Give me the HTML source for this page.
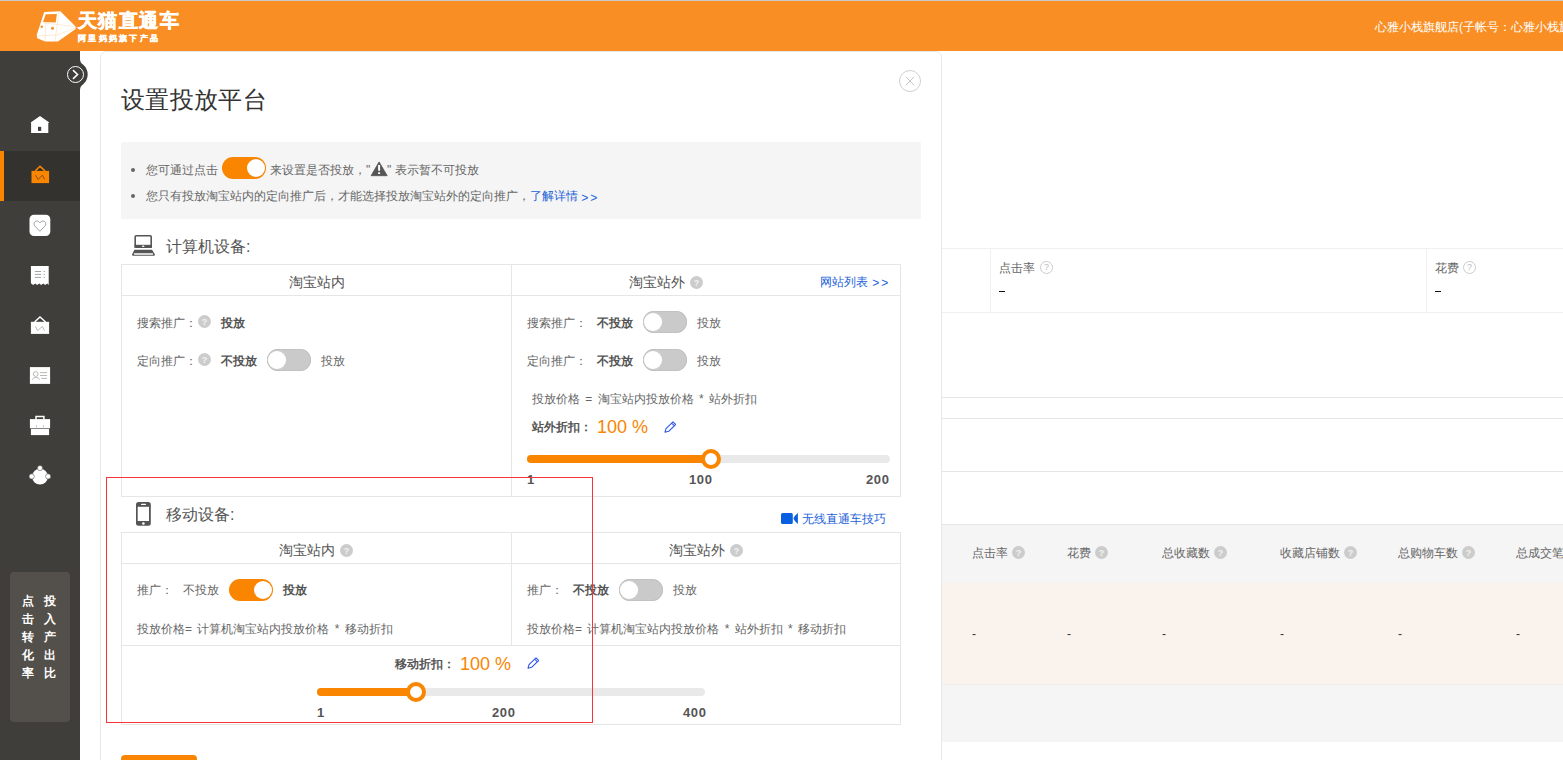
<!DOCTYPE html>
<html><head><meta charset="utf-8">
<style>
*{box-sizing:border-box;margin:0;padding:0}
html,body{width:1563px;height:760px;overflow:hidden;background:#fff;font-family:"Liberation Sans",sans-serif;font-size:12px;color:#666}
.a{position:absolute;white-space:nowrap}
.t{position:absolute;white-space:nowrap;line-height:16px;font-size:12px}
.q{position:absolute;width:13px;height:13px;border-radius:50%;background:#ccc;color:#f2f2f2;font-size:9px;line-height:14px;text-align:center;font-weight:bold}
.qo{position:absolute;width:13px;height:13px;border-radius:50%;border:1px solid #ccc;color:#bbb;font-size:9px;line-height:11px;text-align:center}
.tg{position:absolute;width:44px;height:22px;border-radius:11px;background:#cacaca;box-shadow:inset 0 0 0 0.8px #c0c0c0}
.tg:after{content:"";position:absolute;left:1px;top:2px;width:18px;height:18px;border-radius:50%;background:#fff;box-shadow:0 0 0 0.6px #d0d0d0}
.tg.on{background:#f98500;box-shadow:none}
.tg.on:after{left:25px;box-shadow:none}
.b{font-weight:bold;color:#555}
.or{color:#f98500}
.lk{color:#2262d8}
.hl{position:absolute;height:1px;background:#e6e6e6}
.vl{position:absolute;width:1px;background:#e6e6e6}
.trk{position:absolute;height:8px;border-radius:4px;background:#e9e9e9}
.fil{position:absolute;height:8px;border-radius:4px;background:#f98500}
.hd{position:absolute;width:20px;height:20px;border-radius:50%;border:4px solid #f98500;background:#fff}
.num{position:absolute;white-space:nowrap;font-weight:bold;font-size:13px;line-height:14px;color:#555;letter-spacing:0.6px}
</style></head><body>
<div class="a" style="left:0;top:0;width:1563px;height:1px;background:#c9c9c9"></div>
<div class="a" style="left:0;top:1px;width:1563px;height:50px;background:#f98f24"></div>
<svg class="a" style="left:34px;top:8px" width="46" height="37" viewBox="0 0 46 37">
 <path d="M10.2 4.1 L26.3 3.2 L41.6 18.5 L41.6 20.9 L23.9 33.6 L11.2 33.6 L3.2 30.2 L2.7 27 Z" fill="#fff"/>
 <path d="M11.7 6.3 L22.9 6.1 L21.7 14.6 L9 13.9 Z" fill="#f98f24"/>
 <circle cx="7.8" cy="18.7" r="1.2" fill="#f98f24"/>
 <circle cx="18.5" cy="20.2" r="1.5" fill="#f98f24"/>
 <path d="M3 28 L23 27 L41.6 20 M25 4 L21 33 M10 15 L41 18.5 M12 14 L11 33" stroke="#fcc98f" stroke-width="0.4" fill="none"/>
</svg>
<div class="a" style="left:78px;top:8px;font-size:19px;line-height:26px;font-weight:bold;color:#fff;letter-spacing:1.4px;-webkit-text-stroke:0.6px #fff">天猫直通车</div>
<div class="a" style="left:78px;top:34px;font-size:8px;line-height:10px;font-weight:bold;color:#fff;letter-spacing:2.3px;-webkit-text-stroke:0.3px #fff">阿里妈妈旗下产品</div>
<div class="a" style="left:1375px;top:18.5px;font-size:12px;line-height:16px;color:#fff">心雅小栈旗舰店(子帐号：心雅小栈旗舰店</div>

<div class="a" style="left:0;top:51px;width:80px;height:709px;background:#403e3a"></div>
<svg class="a" style="left:0;top:0" width="100" height="100" viewBox="0 0 100 100"><path d="M79 58 L80 58 C80 62 81 63 83 64.5 A13 13 0 0 1 83 84.5 C81 86 80 87 80 91 L79 91 Z" fill="#403e3a"/></svg>
<div class="a" style="left:66.5px;top:65.8px;width:17px;height:17px;border:1.5px solid #fff;border-radius:50%"></div>
<svg class="a" style="left:70px;top:69px" width="10" height="11" viewBox="0 0 10 11"><path d="M3 1.2 L7.5 5.5 L3 9.8" stroke="#fff" stroke-width="1.6" fill="none"/></svg>
<div class="a" style="left:0;top:151px;width:80px;height:50px;background:#34322e"></div>
<div class="a" style="left:0;top:151px;width:4px;height:50px;background:#f98500"></div>
<svg class="a" style="left:25px;top:110px" width="30" height="30" viewBox="0 0 30 30"><path d="M15 5.9 L24.3 12.4 L23.3 12.9 L23.3 22.9 L6.1 22.9 L6.1 12.9 L5.7 12.4 Z" fill="#fff"/><rect x="13" y="16.8" width="3.2" height="4.1" fill="#403e3a"/></svg>
<svg class="a" style="left:25px;top:160px" width="30" height="30" viewBox="0 0 30 30"><path d="M10.2 11 L15 6.3 L20.2 11" fill="none" stroke="#f98500" stroke-width="1.6"/><rect x="6.5" y="10.9" width="17.6" height="12.2" fill="#f98500"/><path d="M10.5 15.2 L13.2 19.5 L17.4 15.2 L19.7 19.5" stroke="#7a4a1a" stroke-width="0.9" fill="none"/></svg>
<svg class="a" style="left:25px;top:210px" width="30" height="30" viewBox="0 0 30 30"><rect x="4.5" y="4.7" width="20.8" height="21.3" rx="4.5" fill="#fff"/><path d="M14.9 21.3 L10 16.2 C8.3 14.4 9 11.2 11.6 11.1 C13.1 11 14.3 12 14.9 12.9 C15.5 12 16.7 11 18.2 11.1 C20.8 11.2 21.5 14.4 19.8 16.2 Z" fill="none" stroke="#8c8a86" stroke-width="0.8"/></svg>
<svg class="a" style="left:25px;top:260px" width="30" height="30" viewBox="0 0 30 30"><path d="M5.9 5.9 H23.7 V24.9 L22.3 23.4 L20.1 24.9 L18.4 23.4 L16.1 24.9 L14.3 23.4 L12.1 24.9 L10.3 23.4 L8.1 24.9 L5.9 23.2 Z" fill="#fff"/><path d="M9.9 11.5 H16.2 M9.9 14.4 H16.2 M9.9 17.4 H16.2 M18.6 11.5 H19.9 M18.6 14.4 H19.9 M18.6 17.4 H19.9" stroke="#9a9894" stroke-width="0.9"/></svg>
<svg class="a" style="left:25px;top:310px" width="30" height="30" viewBox="0 0 30 30"><path d="M9.6 12 L15 6.9 L20.6 12" fill="none" stroke="#fff" stroke-width="1.5"/><rect x="5.9" y="11.8" width="18.2" height="12.1" fill="#fff"/><path d="M10.5 16.4 L12.6 20.5 L17.4 16.4 L19.5 20.5" stroke="#a9a7a3" stroke-width="0.8" fill="none"/></svg>
<svg class="a" style="left:25px;top:360px" width="30" height="30" viewBox="0 0 30 30"><rect x="4.9" y="7.1" width="20.2" height="16.8" fill="#fff"/><circle cx="10.7" cy="14" r="2.4" fill="none" stroke="#a9a7a3" stroke-width="0.8"/><path d="M7.3 19.7 C7.6 16.8 13.9 16.8 14.4 19.7" fill="none" stroke="#a9a7a3" stroke-width="0.8"/><path d="M15 12.6 H22.1 M15 15.5 H22.1 M16.2 18.4 H22.1" stroke="#a9a7a3" stroke-width="0.8"/></svg>
<svg class="a" style="left:25px;top:410px" width="30" height="30" viewBox="0 0 30 30"><path d="M11 9.5 V6.6 H18.9 V9.5" fill="none" stroke="#fff" stroke-width="1.5"/><rect x="4.9" y="9.1" width="20.2" height="9.1" fill="#fff"/><rect x="5.9" y="18.8" width="18.2" height="6.3" fill="#fff"/><path d="M11.4 15 V19 M18.4 15 V19" stroke="#b9b7b3" stroke-width="0.7"/></svg>
<svg class="a" style="left:25px;top:460px" width="30" height="30" viewBox="0 0 30 30"><circle cx="15" cy="16.6" r="7.9" fill="#fff"/><circle cx="15" cy="8.1" r="2.6" fill="#fff" stroke="#403e3a" stroke-width="0.5"/><circle cx="6.7" cy="16.4" r="2.6" fill="#fff" stroke="#403e3a" stroke-width="0.5"/><circle cx="23.1" cy="16.4" r="2.6" fill="#fff" stroke="#403e3a" stroke-width="0.5"/></svg>
<div class="a" style="left:10px;top:572px;width:60px;height:150px;border-radius:4px;background:#534f4a"></div>
<div class="a" style="left:20px;top:592px;width:16px;font-size:12px;line-height:18px;color:#fff;font-weight:bold;white-space:normal;text-align:center">点击转化率</div>
<div class="a" style="left:42px;top:592px;width:16px;font-size:12px;line-height:18px;color:#fff;font-weight:bold;white-space:normal;text-align:center">投入产出比</div>

<div class="hl" style="left:941px;top:248px;width:622px;background:#f0f0f0"></div>
<div class="hl" style="left:941px;top:312px;width:622px;background:#f0f0f0"></div>
<div class="vl" style="left:990px;top:248px;height:64px;background:#f0f0f0"></div>
<div class="vl" style="left:1426px;top:248px;height:64px;background:#f0f0f0"></div>

<div class="t " style="left:999px;top:259.7px;">点击率</div>

<div class="qo" style="left:1040px;top:261px">?</div>
<div class="a" style="left:999px;top:290.6px;width:5.5px;height:1.6px;background:#111"></div>
<div class="t " style="left:1435px;top:259.7px;">花费</div>

<div class="qo" style="left:1463px;top:261px">?</div>
<div class="a" style="left:1435px;top:290.6px;width:5.5px;height:1.6px;background:#111"></div>
<div class="hl" style="left:941px;top:397px;width:622px"></div>
<div class="hl" style="left:941px;top:418px;width:622px"></div>
<div class="hl" style="left:941px;top:471px;width:622px"></div>
<div class="hl" style="left:941px;top:524px;width:622px"></div>
<div class="a" style="left:941px;top:525px;width:622px;height:57px;background:#f5f5f5"></div>
<div class="a" style="left:941px;top:582px;width:622px;height:102px;background:#faf2ec"></div>
<div class="hl" style="left:941px;top:684px;width:622px;background:#eee"></div>
<div class="a" style="left:941px;top:685px;width:622px;height:57px;background:#f5f5f5"></div>

<div class="t " style="left:972px;top:545px;">点击率</div>

<div class="q" style="left:1012px;top:546px">?</div>
<div class="t " style="left:972px;top:626px;color:#333">-</div>

<div class="t " style="left:1067px;top:545px;">花费</div>

<div class="q" style="left:1095px;top:546px">?</div>
<div class="t " style="left:1067px;top:626px;color:#333">-</div>

<div class="t " style="left:1162px;top:545px;">总收藏数</div>

<div class="q" style="left:1214px;top:546px">?</div>
<div class="t " style="left:1162px;top:626px;color:#333">-</div>

<div class="t " style="left:1280px;top:545px;">收藏店铺数</div>

<div class="q" style="left:1344px;top:546px">?</div>
<div class="t " style="left:1280px;top:626px;color:#333">-</div>

<div class="t " style="left:1398px;top:545px;">总购物车数</div>

<div class="q" style="left:1462px;top:546px">?</div>
<div class="t " style="left:1398px;top:626px;color:#333">-</div>

<div class="t " style="left:1516px;top:545px;">总成交笔数</div>

<div class="q" style="left:1580px;top:546px">?</div>
<div class="t " style="left:1516px;top:626px;color:#333">-</div>

<div class="a" style="left:100px;top:51px;width:842px;height:760px;border:1px solid #e8e8e8;border-radius:6px;background:#fff"></div>
<div class="a" style="left:121px;top:84px;font-size:24px;line-height:32px;color:#333;letter-spacing:0.35px">设置投放平台</div>
<div class="a" style="left:899px;top:70px;width:22px;height:22px;border:1px solid #cfcfcf;border-radius:50%"></div>
<svg class="a" style="left:904px;top:75px" width="12" height="12" viewBox="0 0 12 12"><path d="M1.8 1.8 L10.2 10.2 M10.2 1.8 L1.8 10.2" stroke="#c6c6c6" stroke-width="1"/></svg>
<div class="a" style="left:121px;top:142px;width:800px;height:77px;background:#f5f5f5;border-radius:2px"></div>
<div class="a" style="left:131px;top:168px;width:4px;height:4px;border-radius:50%;background:#666"></div>
<div class="a" style="left:131px;top:194px;width:4px;height:4px;border-radius:50%;background:#666"></div>
<div class="t " style="left:146px;top:161.5px;">您可通过点击</div>

<div class="tg on" style="left:222px;top:157px"></div>
<div class="t " style="left:270px;top:161.5px;">来设置是否投放，"</div>

<svg class="a" style="left:370px;top:161px" width="18" height="16" viewBox="0 0 18 16"><path d="M9.1 0.9 L17.2 14.7 L1.1 14.7 Z" fill="#555" stroke="#555" stroke-width="0.8" stroke-linejoin="round"/><path d="M9.1 3.9 V9.8 M9.1 11.2 V13" stroke="#fff" stroke-width="2"/></svg>
<div class="t " style="left:387px;top:161.5px;">" 表示暂不可投放</div>

<div class="t " style="left:146px;top:188px;">您只有投放淘宝站内的定向推广后，才能选择投放淘宝站外的定向推广，<span class="lk">了解详情 <span style="letter-spacing:2px;position:relative;top:1.5px">&gt;&gt;</span></span></div>

<svg class="a" style="left:132px;top:235px" width="24" height="22" viewBox="0 0 24 22"><rect x="3.2" y="0.8" width="16" height="11.3" rx="1" fill="none" stroke="#555" stroke-width="1.6"/><rect x="2.4" y="9.8" width="17.6" height="3.1" fill="#555"/><ellipse cx="11.2" cy="11.3" rx="1.3" ry="0.7" fill="#fff"/><path d="M2.4 14.8 H20 L23 19.5 Q23 20.8 21.8 20.8 H1.2 Q0 20.8 0 19.5 Z" fill="#555"/><rect x="1.8" y="18.3" width="19.4" height="1.4" rx="0.7" fill="#fff"/></svg>
<div class="a" style="left:166px;top:237px;font-size:16px;line-height:20px;color:#555">计算机设备:</div>
<div class="a" style="left:121px;top:264px;width:780px;height:233px;border:1px solid #e6e6e6"></div>
<div class="hl" style="left:122px;top:295px;width:778px"></div>
<div class="vl" style="left:511px;top:265px;height:231px"></div>
<div class="t " style="left:289px;top:274px;font-size:14px;color:#555">淘宝站内</div>

<div class="t " style="left:629px;top:274px;font-size:14px;color:#555">淘宝站外</div>

<div class="q" style="left:690px;top:276px">?</div>
<div class="t lk" style="left:820px;top:274px;font-size:12px">网站列表 <span style="letter-spacing:2px;margin-left:1px;position:relative;top:1px">&gt;&gt;</span></div>

<div class="t " style="left:137px;top:314.7px;">搜索推广：</div>

<div class="q" style="left:198px;top:315px">?</div>
<div class="t b" style="left:221px;top:314.7px;">投放</div>

<div class="t " style="left:137px;top:352.7px;">定向推广：</div>

<div class="q" style="left:198px;top:353px">?</div>
<div class="t b" style="left:221px;top:352.7px;">不投放</div>

<div class="tg" style="left:267px;top:349px"></div>
<div class="t " style="left:321px;top:352.7px;">投放</div>

<div class="t " style="left:527px;top:314.7px;">搜索推广：</div>

<div class="t b" style="left:597px;top:314.7px;">不投放</div>

<div class="tg" style="left:643px;top:311px"></div>
<div class="t " style="left:697px;top:314.7px;">投放</div>

<div class="t " style="left:527px;top:352.7px;">定向推广：</div>

<div class="t b" style="left:597px;top:352.7px;">不投放</div>

<div class="tg" style="left:643px;top:349px"></div>
<div class="t " style="left:697px;top:352.7px;">投放</div>

<div class="t " style="left:532px;top:391px;word-spacing:2px">投放价格 = 淘宝站内投放价格 * 站外折扣</div>

<div class="t b" style="left:532px;top:418.7px;">站外折扣：</div>

<div class="a or" style="left:597px;top:416px;font-size:18px;line-height:22px">100 %</div>
<svg class="a" style="left:664px;top:421px" width="12" height="12" viewBox="0 0 12 12"><path d="M1 11.2 L2 7.7 L9 0.8 L11.7 3.5 L4.6 10.3 Z M7.7 2.1 L10.4 4.8" fill="none" stroke="#2f55e6" stroke-width="1.1" stroke-linejoin="round"/></svg>
<div class="trk" style="left:527px;top:455px;width:363px"></div>
<div class="fil" style="left:527px;top:455px;width:184px"></div>
<div class="hd" style="left:701px;top:449px"></div>
<div class="num" style="left:527px;top:473px">1</div>
<div class="num" style="left:689px;top:473px">100</div>
<div class="num" style="left:866px;top:473px">200</div>
<svg class="a" style="left:136px;top:502px" width="15" height="24" viewBox="0 0 15 24"><path d="M2.5 0 H12.3 Q14.8 0 14.8 2.5 V21.3 Q14.8 23.8 12.3 23.8 H2.5 Q0 23.8 0 21.3 V2.5 Q0 0 2.5 0 Z" fill="#555"/><rect x="1.7" y="4.8" width="11.3" height="14.2" fill="#fff"/><rect x="5" y="1.8" width="5" height="1.2" rx="0.6" fill="#fff"/><circle cx="7.4" cy="21.5" r="1.3" fill="#fff"/></svg>
<div class="a" style="left:166px;top:505px;font-size:16px;line-height:20px;color:#555">移动设备:</div>
<svg class="a" style="left:781px;top:513px" width="18" height="11" viewBox="0 0 18 11"><rect x="0" y="0" width="11.8" height="11" rx="1.6" fill="#0a5fe0"/><path d="M12.4 5.5 Q13.6 2.5 16.9 0 V11 Q13.6 8.5 12.4 5.5 Z" fill="#0a5fe0"/></svg>
<div class="t lk" style="left:802px;top:510.7px;font-size:12px">无线直通车技巧</div>

<div class="a" style="left:121px;top:532px;width:780px;height:193px;border:1px solid #e6e6e6"></div>
<div class="hl" style="left:122px;top:563px;width:778px"></div>
<div class="hl" style="left:122px;top:645px;width:778px"></div>
<div class="vl" style="left:511px;top:533px;height:112px"></div>
<div class="t " style="left:279px;top:542px;font-size:14px;color:#555">淘宝站内</div>

<div class="q" style="left:340px;top:544px">?</div>
<div class="t " style="left:669px;top:542px;font-size:14px;color:#555">淘宝站外</div>

<div class="q" style="left:730px;top:544px">?</div>
<div class="t " style="left:137px;top:582px;">推广：</div>

<div class="t " style="left:183px;top:582px;">不投放</div>

<div class="tg on" style="left:229px;top:579px"></div>
<div class="t b" style="left:283px;top:582px;">投放</div>

<div class="t " style="left:137px;top:621px;word-spacing:2px">投放价格= 计算机淘宝站内投放价格 * 移动折扣</div>

<div class="t " style="left:527px;top:582px;">推广：</div>

<div class="t b" style="left:573px;top:582px;">不投放</div>

<div class="tg" style="left:619px;top:579px"></div>
<div class="t " style="left:673px;top:582px;">投放</div>

<div class="t " style="left:527px;top:621px;word-spacing:2px">投放价格= 计算机淘宝站内投放价格 * 站外折扣 * 移动折扣</div>

<div class="t b" style="left:395px;top:655.5px;">移动折扣：</div>

<div class="a or" style="left:460px;top:653px;font-size:18px;line-height:22px">100 %</div>
<svg class="a" style="left:527px;top:657px" width="12" height="12" viewBox="0 0 12 12"><path d="M1 11.2 L2 7.7 L9 0.8 L11.7 3.5 L4.6 10.3 Z M7.7 2.1 L10.4 4.8" fill="none" stroke="#2f55e6" stroke-width="1.1" stroke-linejoin="round"/></svg>
<div class="trk" style="left:317px;top:688px;width:388px"></div>
<div class="fil" style="left:317px;top:688px;width:99px"></div>
<div class="hd" style="left:406px;top:682px"></div>
<div class="num" style="left:317px;top:706px">1</div>
<div class="num" style="left:492px;top:706px">200</div>
<div class="num" style="left:683px;top:706px">400</div>
<div class="a" style="left:121px;top:755px;width:76px;height:30px;border-radius:4px;background:#f98500"></div>
<div class="a" style="left:106px;top:477px;width:487px;height:246px;border:1px solid #f5343a"></div>
</body></html>
